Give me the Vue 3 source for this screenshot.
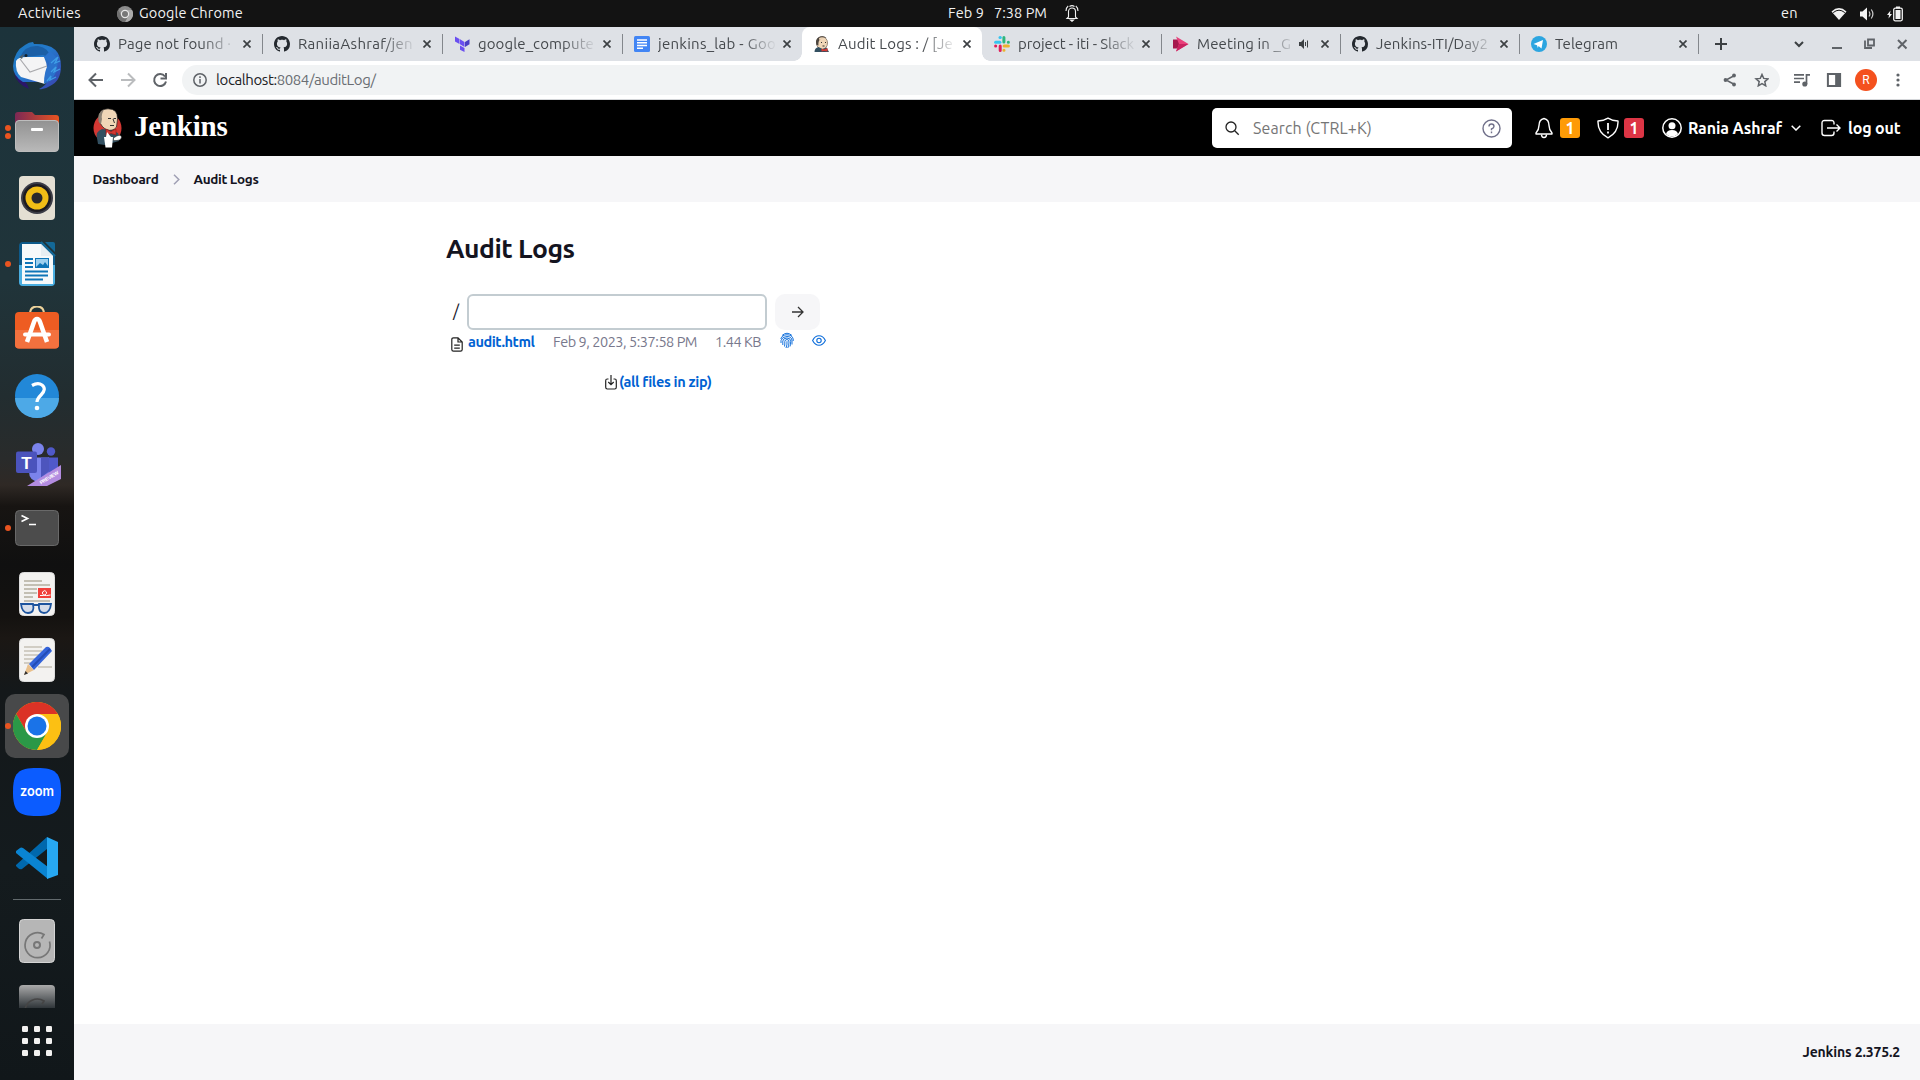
<script setup>
const tabs = [
  { icon: 'github', title: 'Page not found ·', width: 180, text: 113 },
  { icon: 'github', title: 'RaniiaAshraf/jen', width: 180, text: 115 },
  { icon: 'terraform', title: 'google_compute', width: 180, text: 116 },
  { icon: 'docs', title: 'jenkins_lab - Goo', width: 180, text: 118 },
  { icon: 'jenkins', title: 'Audit Logs : / [Je', width: 180, text: 115, active: true },
  { icon: 'slack', title: 'project - iti - Slack', width: 179, text: 116 },
  { icon: 'stream', title: 'Meeting in _G', width: 179, text: 94, audio: true },
  { icon: 'github', title: 'Jenkins-ITI/Day2', width: 179, text: 112 },
  { icon: 'telegram', title: 'Telegram', width: 179, text: 63 },
]
const vFit = {
  mounted(el, { value }) {
    const natural = el.getBoundingClientRect().width
    el.style.letterSpacing = `${(value - natural) / el.textContent.length}px`
  },
}
</script>

<template>
  <div class="desktop">
    <header class="topbar">
      <span class="activities"><span v-fit="63">Activities</span></span>
      <svg class="tb-chrome" width="16" height="16" viewBox="0 0 16 16"><circle cx="8" cy="8" r="8" fill="#8b8b8b" /><path d="M8 4h7A8 8 0 0 1 8 16l3.5-6z" fill="#aaa" /><path d="M4.5 10 1.2 4A8 8 0 0 0 8 16l2-4z" fill="#707070" /><circle cx="8" cy="8" r="4.2" fill="#e8e8e8" /><circle cx="8" cy="8" r="3" fill="#777" /></svg>
      <span class="app"><span v-fit="104">Google Chrome</span></span>
      <span class="date"><span v-fit="36">Feb 9</span></span>
      <span class="time"><span v-fit="53">7:38 PM</span></span>
      <svg class="tb-bell" width="14" height="17" viewBox="0 0 14 17" fill="none" stroke="#f2f2f2" stroke-width="1.100"><path d="M3.500 12V6.500a3.500 3.500 0 0 1 7 0V12l1.500 1.500H2z" /><path d="M1 6Q1.200 2.500 3.200 1M13 6Q12.800 2.500 10.800 1M4.500 1.500Q7-.2 9.500 1.500" /><path d="M5.500 15h3L7 16.300z" fill="#f2f2f2" /></svg>
      <span class="lang"><span v-fit="17">en</span></span>
      <svg class="tb-wifi" width="16" height="14" viewBox="0 0 16 14"><path d="M.5 4.500Q8-2.300 15.500 4.500L8 13z" fill="#f2f2f2" /><path d="M2.200 5.600Q8 .8 13.800 5.600" stroke="#131313" stroke-width="1" fill="none" /></svg>
      <svg class="tb-vol" width="16" height="14" viewBox="0 0 16 14"><path d="M1 4.500h2.500L8 .5v13L3.500 9.500H1z" fill="#f2f2f2" /><path d="M10 4.500q1.800 2.500 0 5M12.300 2.500q3.200 4.500 0 9" stroke="#cfcfcf" stroke-width="1.200" fill="none" /></svg>
      <svg class="tb-bat" width="17" height="16" viewBox="0 0 17 16"><path d="M3.500 4.500 0 9h2L1.500 12.500 5 8H3z" fill="#f2f2f2" /><path d="M9 .5h4v2H9z" fill="#f2f2f2" /><rect x="6.700" y="2.200" width="8.600" height="12.600" rx="1.500" fill="none" stroke="#f2f2f2" stroke-width="1.300" /><rect x="8.500" y="4" width="5" height="9" fill="#f2f2f2" /></svg>
    </header>

    <div class="body">
      <nav class="dock">
        <div class="slot"><svg viewBox="0 0 48 48"><defs><linearGradient id="tb" x1="0" y1="0" x2="1" y2="1"><stop offset="0" stop-color="#1d78be" /><stop offset=".45" stop-color="#2479cc" /><stop offset="1" stop-color="#3b3fae" /></linearGradient></defs><path d="M1 30q2 12 15 17l-2-5z" fill="#2b1569" /><path d="M0 24Q1 9 12 3q4-3 8-3l1 2q27-1 27 22 0 15-11 20-6 4-11 3 6-3 8-7H10Q0 34 0 24z" fill="url(#tb)" /><path d="M7 15Q12 3 25 4q11 2 13 12l-8-3-18 2z" fill="#1b5fa6" /><path d="M3 19q2-4 10-4l18 0q6 12 1 27L8 35Q2 30 3 19z" fill="#f4f4f5" /><path d="m7 17 10 13 17-6" stroke="#a9a9ad" stroke-width="1.200" fill="none" /><path d="M31 15q5 2 5 7-5 6-5 20 7-3 10-8 5-8 3-18L37 9z" fill="#2a72cc" /><path d="m47 19-5 2 3-6-7 6M47 27l-6 3 2-5-5 5M43 35l-6 3 1-4-4 5" stroke="#3f9ee6" stroke-width="1.300" fill="none" /><circle cx="13" cy="13.500" r="1.500" fill="#16242e" /><path d="m6 15 5-3-2 5z" fill="#4d5f6c" /></svg></div>
        <div class="slot"><i class="dots two"></i><svg viewBox="0 0 48 48"><defs><linearGradient id="fa"><stop stop-color="#7c2855" /><stop offset="1" stop-color="#e95420" /></linearGradient><linearGradient id="fb" x2="0" y2="1"><stop stop-color="#929292" /><stop offset="1" stop-color="#b9b9b9" /></linearGradient></defs><path d="M2 38V7q0-3 3-3h14l3 3h21q3 0 3 3v28z" fill="url(#fa)" /><rect x="2.500" y="12.500" width="43" height="31" rx="3.500" fill="url(#fb)" stroke="#bdbdbd" /><rect x="18" y="20" width="12" height="3" rx="1" fill="#fff" /></svg></div>
        <div class="slot"><svg viewBox="0 0 48 48"><rect x="6" y="2" width="36" height="44" rx="4" fill="#e4dfd3" /><circle cx="24" cy="24" r="16" fill="#3b3c46" /><circle cx="24" cy="24" r="14" fill="#1d1b21" /><circle cx="24" cy="24" r="11.500" fill="#f1bd16" /><circle cx="24" cy="24" r="5.500" fill="#29292d" /></svg></div>
        <div class="slot"><i class="dots"></i><svg viewBox="0 0 48 48"><path d="M10 2h18l14 14v26q0 4-4 4H10q-4 0-4-4V6q0-4 4-4z" fill="#0e5a8a" /><path d="M9 4h19l12 12v28H9z" fill="#f7f9fa" /><path d="M32 2h8q2 0 2 2v8z" fill="#136897" /><path d="M28 4v12h12" fill="#e8eef2" /><path d="M28 2 42 16" stroke="#136897" stroke-width="2" /><path d="M6 25h3v19h31V25h2v17q0 4-4 4H10q-4 0-4-4z" fill="#4aaee0" /><path d="M12 19h8M12 23h8M12 27h8M12 31.500h23M12 35.500h23M12 39.500h18" stroke="#0e75b7" stroke-width="2" /><rect x="22.500" y="18.500" width="13" height="9" fill="#9ed0ee" stroke="#0e75b7" /><path d="m23 27 4-4 3 2 2-3 3 4v1z" fill="#0e75b7" /></svg></div>
        <div class="slot"><svg viewBox="0 0 48 48"><path d="M17 8Q17 .5 24 .5T31 8" fill="none" stroke="#ecd29b" stroke-width="2" /><rect x="2" y="6" width="44" height="36.500" rx="4" fill="#ee5c22" /><path d="M2 24h44v14.500q0 4-4 4H6q-4 0-4-4z" fill="#f3713e" /><path d="m14 36 7-20q1-3 3-3t3 3l7 20" fill="none" stroke="#fff" stroke-width="4.500" /><path d="M12 28.500h24" stroke="#fff" stroke-width="4" stroke-linecap="round" /></svg></div>
        <div class="slot"><svg viewBox="0 0 48 48"><circle cx="24" cy="24" r="22" fill="#2288d8" /><path d="M2 26a22 20 0 0 0 44 0z" fill="#4da9e7" /><path d="M19 13.500Q25 10 29 13q5 4-1 10-4 4-4 7" fill="none" stroke="#fff" stroke-width="3.200" /><circle cx="24" cy="36" r="2.300" fill="#fff" /></svg></div>
        <div class="slot"><svg viewBox="0 0 48 48"><circle cx="38" cy="13.500" r="4.200" fill="#5059c9" /><path d="M35 19.500h10v14q-4 5-10 3z" fill="#5059c9" /><circle cx="25" cy="11" r="6" fill="#7b83eb" /><path d="M16 19.500h20v14q-2 11-11 10-9-1-9-10z" fill="#7b83eb" /><path d="M28 19.500h8v14l-8 6z" fill="#4d55bd" /><rect x="3" y="13.500" width="21" height="21.500" rx="2" fill="#4b53bc" /><text x="13.500" y="30.500" text-anchor="middle" class="teams-t">T</text><path d="M14 48 48 27v14l-14 7z" fill="#b38ce0" /><text transform="translate(28 46.500) rotate(-31)" class="preview" textLength="21">PREVIEW</text></svg></div>
        <div class="slot"><i class="dots"></i><svg viewBox="0 0 48 48"><rect x="2.500" y="6.500" width="43" height="35" rx="4" fill="#4c4c4c" stroke="#696969" /><path d="m8.500 11.500 6 3-6 3M16 20.500h7" stroke="#fff" stroke-width="1.700" fill="none" /></svg></div>
        <div class="slot"><svg viewBox="0 0 48 48"><rect x="6.500" y="2.500" width="35" height="43" rx="4" fill="#f3f2f0" stroke="#ddd" /><path d="M11 11h18M11 15h26M11 19h13M11 23h13M11 27h9M11 31h26" stroke="#b4ae9f" stroke-width="1.600" /><rect x="25" y="18" width="13" height="10" fill="#f1403b" /><path d="M27 25.500q7 .5 6.500-3.500-1.500-3-4 0-1 5 8 3" fill="none" stroke="#fff" /><path d="M8 34h12q2 9-5 9-6 0-7-9zM26 34h12q-1 9-7 9-6 0-5-9zM20 35h6" fill="#d6dde9" stroke="#1d549e" stroke-width="1.800" /></svg></div>
        <div class="slot"><svg viewBox="0 0 48 48"><rect x="6.500" y="2.500" width="35" height="43" rx="4" fill="#f3f2f0" stroke="#ddd" /><path d="M11 11h18M11 15h18M11 19h16M11 23h13M11 27h10M25 31h14" stroke="#c6c1b5" stroke-width="1.600" /><path d="m11 39 4-11 6 6z" fill="#e9c08c" /><path d="m11 39 1.500-4 2.500 2.500z" fill="#333" /><path d="m16 28 17-17q2-1 4 1l2 3L21 34z" fill="#3464da" /><path d="m19 31 18-18" stroke="#234cb6" stroke-width="2" /></svg></div>
        <div class="slot current"><i class="dots"></i><svg viewBox="0 0 48 48"><circle cx="24" cy="24" r="24" fill="#fbbc05" /><path d="M3.200 12A24 24 0 0 1 44.800 12H24L13.600 30z" fill="#db3226" /><path d="M3.200 12A24 24 0 0 0 24 48l10.400-18H13.600z" fill="#2b9847" /><path d="M24 12h20.800A24 24 0 0 1 24 48l10.400-18z" fill="#fcc013" /><circle cx="24" cy="24" r="12" fill="#fff" /><circle cx="24" cy="24" r="9.500" fill="#1a73e8" /></svg></div>
        <div class="slot"><svg viewBox="0 0 48 48"><path d="M0 24C0 5 5 0 24 0s24 5 24 24-5 24-24 24S0 43 0 24z" fill="#0b5cff" /><text x="24" y="28" text-anchor="middle" textLength="34" lengthAdjust="spacingAndGlyphs" class="zoom-t">zoom</text></svg></div>
        <div class="slot"><svg viewBox="0 0 48 48"><path d="M3 31 34 3v12L9 35q-2 1-4-1l-2-2z" fill="#0068ad" /><path d="M3 17l4-3q1-1 3 0l25 19v12L3 19z" fill="#0a84d2" /><path d="M34 3l11 5v33l-11 4z" fill="#27a8f2" /></svg></div>
        <hr class="rule" />
        <div class="slot"><svg viewBox="0 0 48 48"><rect x="6.500" y="2.500" width="35" height="43" rx="4" fill="#b6b6b6" stroke="#d4d4d4" /><path d="M36.500 24.500A12.500 12.500 0 1 1 31 17.500l-2.500 4" fill="none" stroke="#777" stroke-width="1.700" /><circle cx="24" cy="28" r="3" fill="none" stroke="#777" stroke-width="2" /></svg></div>
        <div class="slot cut"><svg viewBox="0 0 48 48"><defs><linearGradient id="dk" x2="0" y2="1"><stop stop-color="#aaa" /><stop offset=".52" stop-color="#30363a" /></linearGradient></defs><rect x="6" y="2" width="36" height="44" rx="4" fill="url(#dk)" /><path d="M12 27a12.500 12.500 0 0 1 19-9l-2 3" fill="none" stroke="#454545" stroke-width="1.700" /></svg></div>
        <svg class="apps" width="30" height="30" viewBox="0 0 30 30" fill="#f2f1f0"><g v-for="r in 3" :key="r"><rect v-for="c in 3" :key="c" :x="(c - 1) * 12" :y="(r - 1) * 12" width="6" height="6" rx="1.200" /></g></svg>
      </nav>

      <main class="window">
        <div class="tabs">
          <div v-for="(t, i) in tabs" :key="i" class="tab" :class="{ active: t.active, plain: i === 3 }" :style="{ width: t.width + 'px' }">
            <svg class="fav" width="16" height="16" viewBox="0 0 16 16">
              <path v-if="t.icon === 'github'" fill="#24292f" d="M8 0C3.580 0 0 3.580 0 8c0 3.540 2.290 6.530 5.470 7.590.4.070.55-.17.55-.38 0-.19-.01-.82-.01-1.490-2.010.37-2.530-.49-2.690-.94-.09-.23-.48-.94-.82-1.130-.28-.15-.68-.52-.01-.53.63-.01 1.080.58 1.230.82.72 1.210 1.870.87 2.330.66.07-.52.28-.87.51-1.070-1.780-.2-3.640-.89-3.640-3.950 0-.87.31-1.590.82-2.150-.08-.2-.36-1.020.08-2.120 0 0 .67-.21 2.200.82.64-.18 1.320-.27 2-.27s1.360.09 2 .27c1.530-1.040 2.200-.82 2.200-.82.44 1.100.16 1.920.08 2.120.51.56.82 1.270.82 2.150 0 3.070-1.870 3.750-3.650 3.950.29.25.54.73.54 1.480 0 1.070-.01 1.930-.01 2.200 0 .21.15.46.55.38A8 8 0 0 0 16 8c0-4.420-3.580-8-8-8z" />
              <template v-else-if="t.icon === 'terraform'"><path d="M1 .5 5.500 3v5L1 5.500zM6 3.300 10.500 6v5L6 8.300zM6 9.500l4.500 2.500v4L6 13.800z" fill="#6a4ff0" /><path d="M11 6 15.500 3.300v5L11 11z" fill="#4b3fc4" /></template>
              <template v-else-if="t.icon === 'docs'"><rect width="16" height="16" rx="1.500" fill="#4285f4" /><path d="M3 4h10M3 6.700h10M3 9.500h10M3 12.300h6" stroke="#fff" stroke-width="1.500" /></template>
              <template v-else-if="t.icon === 'jenkins'"><ellipse cx="8" cy="7" rx="5.500" ry="6.500" fill="#f0d6b7" stroke="#5a4a3c" stroke-width=".6" /><path d="M2.500 9Q.5 2 6.500.5q4-.8 6 1.500-5-1-7 2-1.500 2-1 5.500z" fill="#4b443e" /><path d="M5 2q3-1.500 6 0-4 0-5.500 2.500z" fill="#f0d6b7" /><path d="M.5 16q0-4 4-5l4 2 4-1.500 2.500 4.500z" fill="#335061" /><path d="m7.500 12.500 2.500 1 3.500-1.500v3.500L10 15l-2.500.5z" fill="#d33833" /><path d="M7 6.500h1M11 6.500h1M8.500 10h2" stroke="#333" /></template>
              <template v-else-if="t.icon === 'slack'"><g stroke-width="3" stroke-linecap="round"><path d="M1.600 6.200h4.300" stroke="#36c5f0" /><path d="M6 1.600h.3" stroke="#36c5f0" /><path d="M9.900 1.600v4.300M14.300 6.200h.1" stroke="#2eb67d" /><path d="M14.400 9.900h-4.300M9.900 14.300h.1" stroke="#ecb22e" /><path d="M6.200 14.400v-4.300M1.600 9.900h.1" stroke="#e01e5a" /></g></template>
              <template v-else-if="t.icon === 'stream'"><path d="M0 3.500h6l5 4.500-5 4.500H0z" fill="#a5194d" /><path d="M3 .5 15.500 8 3 15.500 6 8z" fill="#e9407b" /><path d="M6 8h9.500L3 15.500z" fill="#c92260" /></template>
              <template v-else><circle cx="8" cy="8" r="8" fill="#2ca5e0" /><path d="m2.500 8 9.500-4-1.500 8.500L7.500 10l-.6 2L6 9.200z" fill="#fff" /></template>
            </svg>
            <span class="title" :class="{ short: t.audio }"><span v-fit="t.text">{{ t.title }}</span></span>
            <svg v-if="t.audio" class="audio" width="10" height="10" viewBox="0 0 10 10"><path d="M0 3h2l3-3v10L2 7H0z" fill="#3c4043" /><path d="M6.500 3v4M8.500 1.500v7" stroke="#3c4043" /></svg>
            <svg class="x" width="8" height="8" viewBox="0 0 8 8" stroke="#3c4043" stroke-width="1.700"><path d="m.5.5 7 7m0-7-7 7" /></svg>
          </div>
          <svg class="plus" width="12" height="12" viewBox="0 0 12 12" stroke="#3c4043" stroke-width="2"><path d="M6 0v12M0 6h12" /></svg>
          <svg class="win" width="114" height="12" viewBox="0 0 114 12" fill="none" stroke="#5f6368" stroke-width="2"><path d="m1 4 4 4 4-4" stroke="#3c4043" /><path d="M38 10h10M71 2.500V10h7M74 1.500h6v6h-6z" stroke-width="1.800" /><path d="m104 2 8.500 8.500m0-8.500L104 10.500" /></svg>
        </div>

        <div class="toolbar">
          <svg class="nav" width="80" height="16" viewBox="0 0 80 16" fill="none" stroke="#5f6368" stroke-width="2"><path d="M15 8H2m6-6.500L1.500 8 8 14.500" /><path d="M33 8h13m-6-6.500L46.500 8 40 14.500" stroke="#babcbe" /><path d="M77 4.500A6 6 0 1 0 78 9.500M78 1v5.500h-5.500" /></svg>
          <div class="omnibox">
            <svg width="14" height="14" viewBox="0 0 14 14" fill="none" stroke="#5f6368" stroke-width="1.500"><circle cx="7" cy="7" r="6.200" /><path d="M7 6v4.500M7 3.200v1.700" /></svg>
            <span class="url"><span v-fit="159.5"><b>localhost:</b>8084/auditLog/</span></span>
            <svg class="share" width="46" height="14" viewBox="0 0 46 14" fill="none" stroke="#5f6368" stroke-width="1.500"><path d="M11.500 2.500 3 7l8.500 4.500" /><g fill="#5f6368" stroke="none"><circle cx="11" cy="2.500" r="1.900" /><circle cx="2.500" cy="7" r="1.900" /><circle cx="11" cy="11.500" r="1.900" /></g><path d="m39 1.500 1.700 3.900 4.300.4-3.200 2.800.9 4.200-3.700-2.200-3.700 2.200.9-4.200L33 5.800l4.300-.4z" /></svg>
          </div>
          <svg class="ext" width="48" height="14" viewBox="0 0 48 14" fill="none" stroke="#5f6368" stroke-width="1.700"><path d="M0 1.800h10M0 5.500h10M0 9.200h6M16 1.800h-3.500v9.500" /><circle cx="10.800" cy="11" r="1.700" fill="#5f6368" /><rect x="33.900" y="1" width="12.200" height="12" stroke-width="2" /><path d="M42 1h4v12h-4z" fill="#5f6368" /></svg>
          <span class="avatar">R</span>
          <svg width="4" height="14" viewBox="0 0 4 14" fill="#5f6368"><circle cx="2" cy="2" r="1.600" /><circle cx="2" cy="7" r="1.600" /><circle cx="2" cy="12" r="1.600" /></svg>
        </div>

        <div class="jheader">
          <svg class="butler" width="29" height="40" viewBox="0 0 29 40"><ellipse cx="14.500" cy="20" rx="14" ry="14.500" fill="#d33833" /><path d="M4 30q-2-6 5-9l9 1 7 3q2 4 1 8l-14 4-7-1z" fill="#335061" /><path d="M6 12Q5 .8 15 .8 25 .8 24.500 11l-1 8q-4 5-10 2.500-5-2-7.500-9.500z" fill="#f0d6b7" stroke="#222" stroke-width=".7" /><path d="M5.500 13Q4 4 11 2 8 6 9 11l-1 5q-2-.5-2.500-3z" fill="#8c8275" /><path d="m13 21 5 2.500 5-2.500v6l-5-1.500-5 2z" fill="#d33833" stroke="#811" stroke-width=".5" /><path d="M15 10.500h3M20.500 10.500h2.500M20 11l1.500 4M17 17.500h4" stroke="#333" fill="none" /><path d="M11 29h9l-1 10.500h-6.500z" fill="#fff" /><path d="m14 24 4 5h-5z" fill="#fff" /><path d="M20.500 30q7-5 8-1 0 4-8 3.500z" fill="#fff" stroke="#222" stroke-width=".5" /></svg>
          <span class="brand"><span v-fit="93.5">Jenkins</span></span>
          <div class="search">
            <svg width="15" height="15" viewBox="0 0 15 15" fill="none" stroke="#222" stroke-width="1.300"><circle cx="6" cy="6" r="5" /><path d="m9.700 9.700 4 4" /></svg>
            <span class="ph"><span v-fit="119">Search (CTRL+K)</span></span>
            <svg width="19" height="19" viewBox="0 0 19 19" fill="none" stroke="#70708a" stroke-width="1.400"><circle cx="9.500" cy="9.500" r="8.500" /><path d="M7 7.500q0-2.500 2.500-2.500t2.500 2.200Q12 9 9.500 10v1.300M9.500 12.500v1.700" /></svg>
          </div>
          <svg class="bell" width="18" height="22" viewBox="0 0 18 22" fill="none" stroke="#fff" stroke-width="1.400"><path d="M9 1.500Q14 2.500 14 8.500q0 4 3 7.500v1H1v-1q3-3.500 3-7.500 0-6 5-7z" stroke-linejoin="round" /><path d="M6.500 17.500q0 3 2.500 3t2.500-3" /></svg>
          <span class="badge">1</span>
          <svg class="shield" width="22" height="22" viewBox="0 0 22 22" fill="none" stroke="#fff" stroke-width="1.400"><path d="M11 1.200Q15 3.800 21 4 21.500 15.500 11 20.800.5 15.500 1 4 7 3.800 11 1.200z" stroke-linejoin="round" /><path d="M11 6v7M11 14.500v2" stroke-width="1.800" /></svg>
          <span class="badge red">1</span>
          <svg class="user" width="20" height="20" viewBox="0 0 20 20"><circle cx="10" cy="10" r="9.200" fill="none" stroke="#fff" stroke-width="1.500" /><circle cx="10" cy="7.800" r="3.500" fill="#fff" /><path d="M4 16q1-4 6-4t6 4q-6 5-12 0z" fill="#fff" /></svg>
          <b class="who"><span v-fit="94">Rania Ashraf</span></b>
          <svg class="chev" width="10" height="6" viewBox="0 0 10 6" fill="none" stroke="#fff" stroke-width="1.500"><path d="m.7.7 4.300 4.300L9.300.7" /></svg>
          <svg class="logout" width="20" height="18" viewBox="0 0 20 18" fill="none" stroke="#fff" stroke-width="1.400"><path d="M13 5.500V4q0-2.500-2.500-2.500h-7Q1 1.500 1 4v10q0 2.500 2.500 2.500h7Q13 16.500 13 14v-1.500M6 9h13m-3.500-3.500L19 9l-3.500 3.500" /></svg>
          <b class="out"><span v-fit="52.5">log out</span></b>
        </div>

        <div class="crumbs">
          <b><span v-fit="66">Dashboard</span></b>
          <svg width="7" height="11" viewBox="0 0 7 11" fill="none" stroke="#a0a0b4" stroke-width="1.500"><path d="m1 .8 4.800 4.700L1 10.200" /></svg>
          <b><span v-fit="65">Audit Logs</span></b>
        </div>

        <section class="content">
          <h1><span v-fit="128.5">Audit Logs</span></h1>
          <div class="path">
            <span class="slash">/</span>
            <input class="field" type="text" aria-label="Path" />
            <button class="go" aria-label="Go"><svg width="12" height="12" viewBox="0 0 12 12" fill="none" stroke="#333" stroke-width="1.300"><path d="M0 6h11M6 1l5 5-5 5" /></svg></button>
          </div>
          <div class="file">
            <svg class="doc" width="12" height="15" viewBox="0 0 12 15" fill="none" stroke="#222" stroke-width="1.200"><path d="M7 .8H2.500Q.8.8.8 2.500v10q0 1.700 1.700 1.700h7q1.700 0 1.700-1.700V5zM7 .8V5h4.200M3.200 8.200h5.600M3.200 11.200h5.600" /></svg>
            <b class="link"><span v-fit="66.5">audit.html</span></b>
            <span class="when"><span v-fit="144">Feb 9, 2023, 5:37:58 PM</span></span>
            <span class="size"><span v-fit="46">1.44 KB</span></span>
            <svg class="finger" width="14" height="17" viewBox="0 0 14 17" fill="none" stroke="#0b6cda" stroke-width=".95"><path d="M2 3.500Q7-1 12 3.500M.8 7Q2 2.800 7 2.800T13.200 7v2M1 11V8.500Q2 4.500 7 4.500t5 4.500v3.500M2.800 13V9q.4-3 4.200-3t3.700 3.500q0 3-.7 5M4.500 14.500Q5 12 4.800 9.500q.2-2 2.200-2t2 2.500q0 3.500-1.200 6M7 9.200q.3 4-1 6.800" /></svg>
            <svg class="eye" width="14" height="11" viewBox="0 0 14 11" fill="none" stroke="#0b6cda" stroke-width="1.100"><path d="M.6 5.500Q3 .8 7 .8t6.400 4.700Q11 10.200 7 10.200T.6 5.500z" /><circle cx="7" cy="5.500" r="2.200" /></svg>
          </div>
          <div class="zip">
            <svg width="12" height="15" viewBox="0 0 12 15" fill="none" stroke="#222" stroke-width="1.200"><path d="M3.500 4H2.300Q.7 4 .7 5.700v6.600Q.7 14 2.300 14h7.400q1.600 0 1.600-1.700V5.700Q11.300 4 9.700 4H8.500M6 0v9.500M3.300 7 6 9.700 8.700 7" /></svg>
            <b class="link"><span v-fit="92.5">(all files in zip)</span></b>
          </div>
        </section>

        <footer class="foot"><b><span v-fit="97.5">Jenkins 2.375.2</span></b></footer>
      </main>
    </div>
  </div>
</template>

<style>
body { margin: 0; overflow: hidden; }
</style>

<style scoped>
.desktop { width: 1920px; height: 1080px; overflow: hidden; display: flex; flex-direction: column; font-family: "Ubuntu", "Noto Sans", sans-serif; color: #14141f; }
.desktop * { box-sizing: border-box; }
svg { display: block; flex: none; }
span { white-space: nowrap; }
.topbar { height: 27px; flex: none; background: #131313; color: #f2f2f2; display: flex; align-items: center; font-size: 14.500px; line-height: 25px; }
.topbar > span { margin-bottom: 2px; }
.activities { width: 99px; padding-left: 18px; }
.tb-chrome { margin: 0 6px 0 18px; }
.date { margin-left: 705px; width: 46px; }
.time { width: 53px; }
.tb-bell { margin-left: 18px; }
.lang { margin-left: 702px; width: 17px; }
.tb-wifi { margin-left: 33px; }
.tb-vol { margin-left: 12px; }
.tb-bat { margin-left: 12px; }
.body { flex: 1; min-height: 0; display: flex; }
.dock { width: 74px; flex: none; display: flex; flex-direction: column; align-items: center; padding-top: 6px; background: linear-gradient(#1c333b 0, #20343a 24%, #222d30 35%, #292b2b 41%, #2f2925 43.500%, #171412 45.500%, #101010 51%, #141210 56%, #1b1714 58%, #14181a 63%, #141b1e 80%, #11171a 100%); }
.slot { width: 74px; height: 66px; flex: none; position: relative; display: flex; align-items: center; justify-content: center; }
.slot svg { width: 48px; height: 48px; position: relative; }
.current::before { content: ""; position: absolute; left: 5px; top: 1px; width: 64px; height: 64px; border-radius: 10px; background: #48494a; }
.dots { position: absolute; z-index: 1; left: 5px; top: 30px; width: 6px; height: 6px; border-radius: 50%; background: #e95420; }
.two { top: 26px; box-shadow: 0 8px #e95420; }
.rule { width: 48px; height: 1px; margin: 8px 0; border: 0; background: #626a6d; }
.cut { height: 34px; overflow: hidden; align-items: flex-start; padding-top: 9px; }
.apps { margin-top: 18px; }
.teams-t { font: 700 17px "Liberation Sans", sans-serif; fill: #fff; }
.preview { font: 700 5px "Liberation Sans", sans-serif; fill: #fff; }
.zoom-t { font: 600 14px "Inter", sans-serif; fill: #fff; }
.window { flex: 1; min-width: 0; background: #fff; display: flex; flex-direction: column; }
.tabs { height: 34px; flex: none; background: #dee1e6; display: flex; align-items: center; padding-left: 8px; font-size: 15px; line-height: 32px; color: #45494d; }
.tab { height: 34px; flex: none; position: relative; display: flex; align-items: center; padding: 0 12px; }
.tab::after { content: ""; position: absolute; right: -1px; top: 7px; width: 1px; height: 20px; background: #83878c; }
.plain::after { display: none; }
.active { background: #fff; border-radius: 8px 8px 0 0; }
.active::before { content: ""; position: absolute; left: -8px; bottom: 0; width: 8px; height: 8px; background: radial-gradient(circle at 0 0, #dee1e6 7.500px, #fff 8px); }
.active::after { right: -8px; top: auto; bottom: 0; width: 8px; height: 8px; background: radial-gradient(circle at 100% 0, #dee1e6 7.500px, #fff 8px); }
.fav { margin-right: 8px; }
.title { width: 118px; height: 32px; overflow: hidden; -webkit-mask-image: linear-gradient(90deg, #000 84px, transparent 119px); mask-image: linear-gradient(90deg, #000 84px, transparent 119px); }
.short { width: 98px; -webkit-mask-image: linear-gradient(90deg, #000 64px, transparent 100px); mask-image: linear-gradient(90deg, #000 64px, transparent 100px); }
.audio { margin-left: 4px; }
.x { margin-left: auto; margin-right: -.5px; }
.plus { margin-left: 17px; }
.win { margin-left: 67px; }
.toolbar { height: 39px; flex: none; display: flex; align-items: center; border-bottom: 1px solid #d4d6d9; padding-left: 14px; font-size: 15px; }
.nav { margin-right: 14px; }
.omnibox { width: 1598px; height: 30px; border-radius: 15px; background: #f1f3f4; display: flex; align-items: center; padding: 0 11px; color: #6a6e73; }
.url { margin-left: 9px; line-height: 30px; }
.url b { font-weight: 400; color: #202124; }
.share { margin-left: auto; }
.ext { margin: 0 13px 0 14px; }
.avatar { width: 22px; height: 22px; margin-right: 19px; border-radius: 50%; background: #f4511e; color: #fff; font: 12px/22px Roboto, sans-serif; text-align: center; }
.jheader { height: 56px; flex: none; background: #000; color: #fff; display: flex; align-items: center; padding-left: 19px; font-size: 16px; }
.brand { font: 700 29px/52px "Liberation Serif", serif; width: 94px; margin: -4px 0 0 12px; }
.search { width: 300px; height: 40px; margin-left: 984px; padding: 0 11px 0 13px; background: #fff; border-radius: 5px; display: flex; align-items: center; }
.ph { margin: 0 auto 0 13px; color: #757575; }
.bell { margin-left: 23px; }
.badge { width: 20px; height: 20px; margin-left: 7px; border-radius: 3px; background: #fe9b07; font-weight: 700; line-height: 20px; text-align: center; }
.shield { margin-left: 17px; }
.red { background: #dc3545; margin-left: 5px; }
.user { margin-left: 18px; }
.who { width: 94px; margin-left: 6px; }
.chev { margin-left: 9px; }
.logout { margin-left: 20px; }
.out { margin-left: 7px; }
.crumbs { height: 46px; flex: none; background: #f6f6f8; display: flex; align-items: center; padding-left: 18.500px; font-size: 13.500px; gap: 14px; }
.content { flex: 1; padding-left: 372px; font-size: 14.500px; }
h1 { margin: 29px 0 0; font-size: 26.500px; line-height: 34px; font-weight: 700; }
.path { display: flex; align-items: center; margin-top: 29px; }
.slash { width: 21px; margin-top: -2px; padding-left: 7px; font-size: 16.500px; }
.field { width: 300px; height: 36px; padding: 0 8px; border: 2px solid #c3ccd1; border-radius: 6px; background: #fff; }
.go { width: 45px; height: 36px; margin-left: 8px; border: 0; border-radius: 10px; background: #f6f6f8; display: flex; align-items: center; justify-content: center; padding: 0; }
.file { height: 24px; display: flex; align-items: center; padding-left: 5px; }
.doc { margin: 4px 5px 0 0; }
.link { color: #0062d2; margin-bottom: 2px; }
.file .link { width: 67px; }
.when, .size { color: #78788c; margin: 0 0 2px 18px; }
.size { width: 46px; }
.finger { margin: -4px 0 0 19px; }
.eye { margin: -4px 0 0 18px; }
.zip { display: flex; align-items: center; gap: 2px; margin-top: 17px; height: 22px; padding-left: 159px; }
.foot { height: 56px; flex: none; background: #f6f6f8; display: flex; align-items: center; justify-content: flex-end; padding-right: 20px; font-size: 14px; line-height: 20px; padding-bottom: 1px; }
</style>
